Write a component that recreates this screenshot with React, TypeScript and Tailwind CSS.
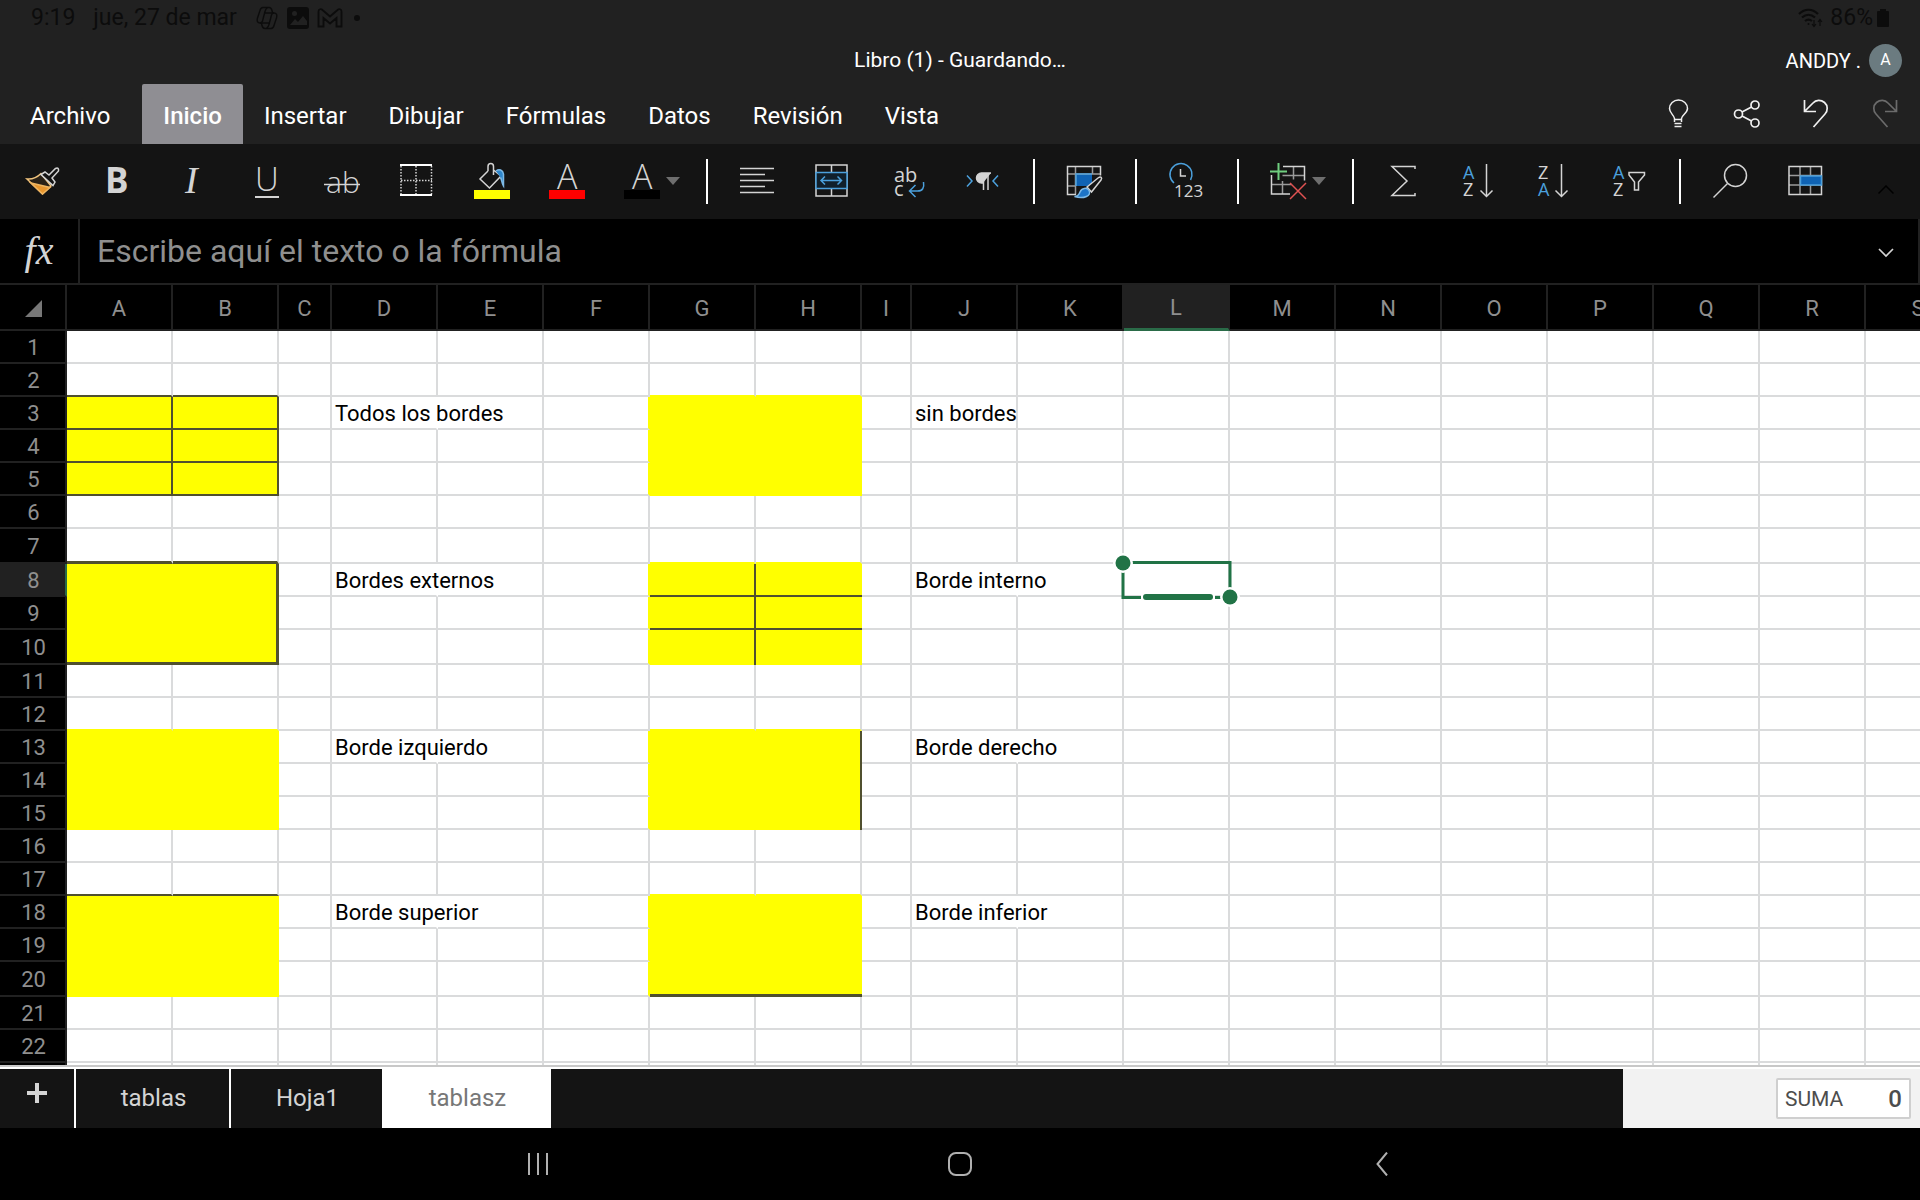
import type { ReactNode } from "react";

const columns = [
  { name: "A", width: "w-[106px]" },
  { name: "B", width: "w-[106px]" },
  { name: "C", width: "w-[53px]" },
  { name: "D", width: "w-[106px]" },
  { name: "E", width: "w-[106px]" },
  { name: "F", width: "w-[106px]" },
  { name: "G", width: "w-[106px]" },
  { name: "H", width: "w-[106px]" },
  { name: "I", width: "w-[50px]" },
  { name: "J", width: "w-[106px]" },
  { name: "K", width: "w-[106px]" },
  { name: "L", width: "w-[106px]" },
  { name: "M", width: "w-[106px]" },
  { name: "N", width: "w-[106px]" },
  { name: "O", width: "w-[106px]" },
  { name: "P", width: "w-[106px]" },
  { name: "Q", width: "w-[106px]" },
  { name: "R", width: "w-[106px]" },
  { name: "S", width: "w-[106px]" },
];

// the last row only peeks out above the sheet tabs, it gets no number
const lastRow = 23;
const rows = Array.from({ length: lastRow }, (_, i) => i + 1);
const tallRows = [7, 10, 20];

const texts: Record<string, string> = {
  D3: "Todos los bordes",
  J3: "sin bordes",
  D8: "Bordes externos",
  J8: "Borde interno",
  D13: "Borde izquierdo",
  J13: "Borde derecho",
  D18: "Borde superior",
  J18: "Borde inferior",
};

// text in these cells runs over into the next column
const overflowing = ["D3", "D8", "J8", "D13", "J13", "D18", "J18"];

type Edge = "thin" | "thick";
type Block = { row: number; col: number; top?: Edge; right?: Edge; bottom?: Edge; inner?: Edge };

// every block is 2 columns x 3 rows
const blocks: Block[] = [
  { row: 3, col: 0, top: "thin", right: "thin", bottom: "thin", inner: "thin" },
  { row: 3, col: 6 },
  { row: 8, col: 0, top: "thick", right: "thick", bottom: "thick" },
  { row: 8, col: 6, inner: "thin" },
  { row: 13, col: 0 },
  { row: 13, col: 6, right: "thin" },
  { row: 18, col: 0, top: "thin" },
  { row: 18, col: 6, bottom: "thick" },
];

const rightEdge = {
  grid: "border-r-2 border-r-[#dadbdc]",
  blank: "border-r-2 border-r-white",
  fill: "border-r-2 border-r-[#ffff00]",
  none: "",
  thin: "border-r-2 border-r-[#50502f]",
  thick: "border-r-3 border-r-[#50502f]",
};

const bottomEdge = {
  grid: "border-b-2 border-b-[#dadbdc]",
  fill: "border-b-2 border-b-[#ffff00]",
  none: "",
  thin: "border-b-2 border-b-[#50502f]",
  thick: "border-b-3 border-b-[#50502f]",
};

const cellStyle = (row: number, col: number) => {
  let right: keyof typeof rightEdge = "grid";
  let bottom: keyof typeof bottomEdge = "grid";
  let bg = "";

  if (overflowing.includes(columns[col].name + row)) right = "blank";

  for (const b of blocks) {
    const inCols = col === b.col || col === b.col + 1;
    const inRows = row >= b.row && row < b.row + 3;
    if (inCols && row === b.row - 1) bottom = b.top ?? "fill";
    if (inRows && col === b.col - 1) right = "fill";
    if (inCols && inRows) {
      bg = "bg-[#ffff00]";
      right = (col === b.col ? b.inner : b.right) ?? "none";
      bottom = (row === b.row + 2 ? b.bottom : b.inner) ?? "none";
    }
  }
  return `${rightEdge[right]} ${bottomEdge[bottom]} ${bg}`;
};

const menu = ["Archivo", "Inicio", "Insertar", "Dibujar", "Fórmulas", "Datos", "Revisión", "Vista"];

const Tool = ({ label, wide, children }: { label: string; wide?: boolean; children: ReactNode }) => (
  <button aria-label={label} className={`shrink-0 h-[75px] ${wide ? "w-[88px]" : "w-[75px]"}`}>
    <svg
      viewBox={wide ? "0 0 88 75" : "0 0 75 75"}
      className="block h-full w-full"
      fill="none"
      stroke="#d4d4d4"
      strokeWidth="1.5"
    >
      {children}
    </svg>
  </button>
);

const Divider = () => <div className="ml-[13px] mr-3 h-[45px] w-0.5 shrink-0 bg-white" />;

const Caret = () => <path d="M61 33h14l-7 8z" fill="#6e6e6e" stroke="none" />;

const Letter = ({ x, y, size, color = "#d4d4d4", children }: { x: number; y: number; size: number; color?: string; children: string }) => (
  <text x={x} y={y} fontSize={size} fill={color} stroke="none" fontWeight={size < 25 ? 400 : 300} fontFamily="'Open Sans', sans-serif">
    {children}
  </text>
);

const StatusBar = () => (
  <div className="flex h-9 items-center justify-between pl-[31px] pr-[31px] text-[23px] text-[#0c0c0c]">
    <div className="flex items-center">
      <span>9:19</span>
      <span className="ml-[18px]">jue, 27 de mar</span>
      <svg viewBox="0 0 24 24" className="ml-[18px] h-6 w-6" fill="none" stroke="currentColor" strokeWidth="1.4">
        <path d="M8 1.500h6c2 0 2.500 1 3 3l.5 2M8 1.500C6 1.500 5.300 3 4.800 5L2.500 12c-1 3 0 5 2.500 5h3M16 22.500h-6c-2 0-2.500-1-3-3l-.5-2M16 22.500c2 0 2.700-1.500 3.200-3.500l2.300-7c1-3 0-5-2.500-5h-3" />
        <path d="M12.500 1.500c-1.500 1-2 2-2.500 4L7.500 15c-.4 1.600-1 2-2.500 2M11.500 22.500c1.500-1 2-2 2.500-4L16.500 9c.4-1.600 1-2 2.500-2M9.500 7H16M8 17h6.500" />
      </svg>
      <svg viewBox="0 0 22 22" className="ml-2 h-[22px] w-[22px]">
        <rect width="22" height="22" rx="3" fill="currentColor" />
        <circle cx="7.500" cy="6.500" r="2.500" fill="#212121" />
        <path d="M3 18l5-6 3 3 5-6 4 5v4z" fill="#212121" />
      </svg>
      <svg viewBox="0 0 26 20" className="ml-2 h-5 w-[26px]" fill="none" stroke="currentColor" strokeWidth="1.8">
        <path d="M1.500 3.500C1.500 1 4 .5 5.500 2L13 8.500 20.500 2c1.500-1.500 4-1 4 1.500V18.500h-5V10L13 15.500 6.500 10v8.500h-5z" />
      </svg>
      <span className="ml-[11px] h-1.5 w-1.5 rounded-full bg-current" />
    </div>
    <div className="flex items-center">
      <svg viewBox="0 0 26 22" className="h-[22px] w-[26px]" fill="none" stroke="currentColor" strokeWidth="2.200">
        <path d="M1 7c6-5.500 13-5.500 19 0M4 10.500c4-3.500 9-3.500 13 0M7 14c2.500-2 4.500-2 7 0" />
        <circle cx="10.500" cy="17" r="1" fill="currentColor" stroke="none" />
        <path d="M16 13v6M14 17l2 2.500 2-2.500M22 19v-6M20 15l2-2.500 2 2.500" strokeWidth="1.200" />
      </svg>
      <span className="ml-1.5">86%</span>
      <svg viewBox="0 0 12 18" className="ml-1 h-[18px] w-3">
        <path d="M3 0h6v2h2q1 0 1 1v14q0 1-1 1H1q-1 0-1-1V3q0-1 1-1h2z" fill="currentColor" />
      </svg>
    </div>
  </div>
);

const Header = () => (
  <header className="bg-[#212121] text-white">
    <StatusBar />

    {/* title and account */}
    <div className="grid h-12 grid-cols-3 items-center pr-[18px]">
      <h1 className="col-start-2 pl-[18px] pt-0.5 text-center text-[21px]">Libro (1) - Guardando…</h1>
      <div className="flex items-center justify-end gap-2">
        <span className="pt-0.5 text-xl">ANDDY .</span>
        <span className="flex h-[33px] w-[33px] items-center justify-center rounded-full bg-[#6b7b80] text-base">A</span>
      </div>
    </div>

    {/* menu */}
    <div className="flex h-[60px] justify-between">
      <nav className="flex pl-[9px]">
        {menu.map((item) => (
          <button
            key={item}
            className={`px-[21px] pt-[3px] text-2xl first:mr-[11px] ${item === "Inicio" ? "rounded-t-xs bg-[#8f8e93] font-medium" : ""}`}
          >
            {item}
          </button>
        ))}
      </nav>
      <div className="flex items-center gap-[37px] pr-[19px]">
        <button aria-label="Ayuda">
          <svg viewBox="0 0 32 32" className="h-8 w-8" fill="none" stroke="#f0f0f0" strokeWidth="1.500">
            <path d="M12.500 24v-3.500C12 17 7.500 15 7.500 10.500a9 8.500 0 0 1 18 0C25.500 15 20 17 19.500 20.500V24M12.500 21.500h7M12.500 25.500h7M12.500 28.500h7" />
          </svg>
        </button>
        <button aria-label="Compartir">
          <svg viewBox="0 0 32 32" className="h-8 w-8" fill="none" stroke="#f0f0f0" strokeWidth="1.700">
            <circle cx="7.500" cy="16" r="4" />
            <circle cx="24" cy="7" r="4" />
            <circle cx="24" cy="25" r="4" />
            <path d="M11 14l9.500-5M11 18l9.500 5" />
          </svg>
        </button>
        <button aria-label="Deshacer">
          <svg viewBox="0 0 32 32" className="h-8 w-8" fill="none" stroke="#f0f0f0" strokeWidth="1.700">
            <path d="M4.500 2v11.500H16M4.500 13.500L13 5C16 1.500 21 1.500 24.500 4.500S28 13 25 16L13.500 29" />
          </svg>
        </button>
        <button aria-label="Rehacer">
          <svg viewBox="0 0 32 32" className="h-8 w-8" fill="none" stroke="#6b6b6b" strokeWidth="1.700">
            <path d="M27.500 2v11.500H16M27.500 13.500L19 5C16 1.500 11 1.500 7.500 4.500S4 13 7 16L18.500 29" />
          </svg>
        </button>
      </div>
    </div>
  </header>
);

const Toolbar = () => (
  <div className="flex h-[75px] items-center overflow-hidden bg-[#141414] pl-[5px]">
    <Tool label="Copiar formato">
      <path d="M22 35c5 .5 10-1.500 14-5.500l10 12.500-8.500 8z" fill="#2a2116" stroke="#efc27c" />
      <path d="M26 39l19 4.500-7.500 6.500z" fill="#e8962e" stroke="#efb45f" />
      <path d="M36 30.500l4-2.500 4 3 6.500-6.500q3.500-1.500 3 2.500L47 34l3 4-2 3.500z" fill="#141414" />
    </Tool>
    <Tool label="Negrita">
      <text x="25" y="49" fontSize="35" fontWeight="700" fill="#d4d4d4" stroke="none" fontFamily="'Open Sans', sans-serif">B</text>
    </Tool>
    <Tool label="Cursiva">
      <text x="30" y="49" fontSize="38" fontStyle="italic" fill="#d4d4d4" stroke="none" fontFamily="'Liberation Serif', serif">I</text>
    </Tool>
    <Tool label="Subrayado">
      <Letter x={25} y={47} size={33}>U</Letter>
      <path d="M25 53h24" strokeWidth="2" />
    </Tool>
    <Tool label="Tachado">
      <Letter x={21} y={49} size={30}>ab</Letter>
      <path d="M19 40.500h36" />
    </Tool>
    <Tool label="Bordes">
      <path d="M21 22v29M36 22v29M51.500 22v29M21 36.500h31" strokeDasharray="1.500 1.500" />
      <path d="M20 21h32M20 51h32" stroke="#fff" strokeWidth="2" />
    </Tool>
    <Tool label="Color de relleno">
      <path d="M33 27l-8 8 9.500 9L46 32l-7.500-6M33 27v-4.500c0-4 5.500-4 5.500 0V31" />
      <path d="M41 27c3-2.500 7-1 7.500 3v12c-2-3-1.500-6-3-8.500" fill="#2f87cc" stroke="#7db9e6" />
      <path d="M19 46h36v9H19z" fill="#ffff00" stroke="none" />
    </Tool>
    <Tool label="Color de fuente rojo">
      <Letter x={27} y={45} size={34}>A</Letter>
      <path d="M19 46h36v9H19z" fill="#ff0000" stroke="none" />
    </Tool>
    <Tool label="Color de fuente" wide>
      <Letter x={27} y={45} size={34}>A</Letter>
      <path d="M19 46h36v9H19z" fill="#000" stroke="none" />
      <Caret />
    </Tool>
    <Divider />
    <Tool label="Alinear">
      <path d="M20 24.500h34M20 30.500h25M20 36.500h34M20 42.500h25M20 48.500h34" />
    </Tool>
    <Tool label="Combinar y centrar">
      <path d="M21 21h31v31H21zM36.500 21v7M36.500 45v7" />
      <path d="M21 28.500h31v16H21z" fill="#10202c" stroke="#4ba0dc" />
      <path d="M26 36.500h20.500M30 32.500l-4 4 4 4M42.500 32.500l4 4-4 4" stroke="#4ba0dc" />
    </Tool>
    <Tool label="Ajustar texto">
      <Letter x={24} y={38} size={20}>ab</Letter>
      <Letter x={24} y={52} size={20}>c</Letter>
      <path d="M53.500 38c1 6-1 9-6 9H39.500M45.500 41l-6 6 6 6" stroke="#4ba0dc" />
    </Tool>
    <Tool label="Dirección del texto">
      <path d="M22 31.500l5 5.500-5 5.500M53 31.500L48 37l5 5.500" stroke="#4ba0dc" />
      <path d="M46 29H36.500a5 5 0 0 0 0 10H38" fill="#d4d4d4" />
      <path d="M38.500 29v17M43 29v17" />
    </Tool>
    <Divider />
    <Tool label="Formato de tabla">
      <path d="M29 30h16v12H29z" fill="#0f63b4" stroke="none" />
      <path d="M28.500 22.500v28M45.500 22.500v8M20.500 30h33M20.500 42h8" stroke="#9a9a9a" />
      <path d="M29 50.500h-8.500v-28h33v9" />
      <path d="M29 42V30h16" stroke="#4ba0dc" />
      <path d="M40 43l11-9c3-2 4.500-.5 3 2L44.500 48z" fill="#141414" />
      <path d="M27.500 52.500c3 0 4.500-1.500 5.500-4.500 1.500-4 7-5 9-1.500 3 5-5 9-14.500 6z" fill="#1d74c7" stroke="#7db9e6" />
    </Tool>
    <Divider />
    <Tool label="Formato de número">
      <path d="M25 39a11 11 0 1 1 16.500-3" stroke="#4ba0dc" />
      <path d="M31.500 25v7H37" />
      <Letter x={25} y={53} size={17}>123</Letter>
    </Tool>
    <Divider />
    <Tool label="Insertar y eliminar celdas" wide>
      <path d="M31.500 37v13M42.500 22.500v13M31.500 31.500h22M20.500 40.500h20" stroke="#9a9a9a" />
      <path d="M32 22.500h21.500v14M20.500 31v19H39" />
      <path d="M27.500 19v17M19 27.500h17" stroke="#6fcf7f" strokeWidth="2" />
      <path d="M39 39l16 16M55 39L39 55" stroke="#e05252" />
      <Caret />
    </Tool>
    <Divider />
    <Tool label="Autosuma">
      <path d="M49 25v-2.500H26L41 37 26 51.500h23V49" />
    </Tool>
    <Tool label="Ordenar de A a Z">
      <Letter x={22} y={35} size={18} color="#4ba0dc">A</Letter>
      <Letter x={22} y={52} size={18}>Z</Letter>
      <path d="M45.500 20v32.500M39.500 46.500l6 6 6-6" />
    </Tool>
    <Tool label="Ordenar de Z a A">
      <Letter x={22} y={35} size={18}>Z</Letter>
      <Letter x={22} y={52} size={18} color="#4ba0dc">A</Letter>
      <path d="M45.500 20v32.500M39.500 46.500l6 6 6-6" />
    </Tool>
    <Tool label="Ordenar y filtrar">
      <Letter x={22} y={35} size={18} color="#4ba0dc">A</Letter>
      <Letter x={22} y={52} size={18}>Z</Letter>
      <path d="M38 28.500h15.500V31l-6 7v8h-4v-8L38 31z" />
    </Tool>
    <Divider />
    <Tool label="Buscar">
      <circle cx="42.500" cy="31.500" r="11" />
      <path d="M34.500 39.500L20.500 53.500" />
    </Tool>
    <Tool label="Tabla">
      <path d="M32 22.500v28M42.500 22.500v28M21 31.500h32.500M21 41h32.500" stroke="#9a9a9a" />
      <path d="M21 22.500h32.500v28H21z" />
      <path d="M32.500 32h21v9h-21z" fill="#0f63b4" stroke="#4ba0dc" />
    </Tool>
    <button aria-label="Contraer" className="ml-auto flex items-center self-stretch pr-[26px] pt-4">
      <svg viewBox="0 0 16 10" className="h-2.5 w-4" fill="none" stroke="#000" strokeWidth="1.500">
        <path d="M.5 8.500L8 1l7.500 7.500" />
      </svg>
    </button>
  </div>
);

const FormulaBar = () => (
  <div className="flex h-16 border-r-2 border-[#212121] bg-black">
    <label
      htmlFor="formula"
      className="flex w-20 items-center justify-center border-r-2 border-[#212121] font-['Liberation_Serif',serif] text-[40px] italic leading-10 text-[#d4d4d4]"
    >
      fx
    </label>
    <input
      id="formula"
      placeholder="Escribe aquí el texto o la fórmula"
      className="min-w-0 flex-1 px-[17px] text-[32px] text-white outline-none placeholder:text-[#8f8f8f]"
    />
    <button aria-label="Expandir" className="pr-6 pt-1">
      <svg viewBox="0 0 16 10" className="h-2.5 w-4" fill="none" stroke="#d4d4d4" strokeWidth="1.700">
        <path d="M1 1l7 7 7-7" />
      </svg>
    </button>
  </div>
);

// selected cell outline with its two drag handles
const Selection = () => (
  <svg viewBox="0 0 130 60" className="absolute -left-3 -top-3 h-[60px] w-[130px]">
    <path d="M11 10.500h107v35H11z" fill="none" stroke="#217346" strokeWidth="3" />
    <rect x="29" y="40" width="74" height="11" fill="#fff" />
    <rect x="31" y="42" width="70" height="6" rx="3" fill="#217346" />
    <circle cx="11" cy="11" r="10" fill="#fff" />
    <circle cx="11" cy="11" r="7.500" fill="#217346" />
    <circle cx="118" cy="45" r="10" fill="#fff" />
    <circle cx="118" cy="45" r="7.500" fill="#217346" />
  </svg>
);

const Sheet = () => (
  <main className="min-h-0 flex-1 overflow-hidden bg-white">
    <table className="w-px table-fixed border-separate border-spacing-0 text-[22px] leading-7">
      <colgroup>
        <col className="w-[67px]" />
        {columns.map((c) => (
          <col key={c.name} className={c.width} />
        ))}
      </colgroup>
      <thead>
        <tr className="h-12 bg-black text-[#8f8f8f]">
          <td className="border-y-2 border-r-2 border-[#212121] p-0">
            <svg viewBox="0 0 17 17" className="ml-[25px] mt-0.5 h-[17px] w-[17px]">
              <path d="M17 0v17H0z" fill="#777" />
            </svg>
          </td>
          {columns.map((c) => (
            <th
              key={c.name}
              scope="col"
              className={`border-y-2 border-r-2 border-[#212121] p-0 pt-[3px] font-normal ${
                c.name === "L" ? "border-b-3 border-b-[#2a6b48] bg-[#212121]" : ""
              }`}
            >
              {c.name}
            </th>
          ))}
        </tr>
      </thead>
      <tbody>
        {rows.map((row) => (
          <tr key={row} className={tallRows.includes(row) ? "h-[35px]" : "h-[33px]"}>
            <th
              scope="row"
              className={`border-b-2 border-r-2 border-[#212121] p-0 pl-0.5 pt-[3px] font-normal text-[#8f8f8f] ${
                row === 8 ? "border-r-[#2a6b48] bg-[#212121]" : "bg-black"
              }`}
            >
              {row < lastRow && row}
            </th>
            {columns.map((c, col) => {
              const id = c.name + row;
              return (
                <td
                  key={id}
                  className={`whitespace-nowrap p-0 pl-[3px] pt-[3px] text-black ${id === "L8" ? "relative" : ""} ${cellStyle(row, col)}`}
                >
                  {texts[id]}
                  {id === "L8" && <Selection />}
                </td>
              );
            })}
          </tr>
        ))}
      </tbody>
    </table>
  </main>
);

const SheetTabs = () => (
  <footer className="border-t-2 border-[#c8c8c8] bg-white pt-0.5">
    <div className="flex h-[59px] bg-[#141414] text-2xl text-[#d4d4d4]">
      <button aria-label="Nueva hoja" className="flex w-[76px] justify-center border-r-2 border-white pt-3.5">
        <svg viewBox="0 0 20 20" className="h-5 w-5">
          <path d="M8 0h4v8h8v4h-8v8H8v-8H0V8h8z" fill="#d4d4d4" />
        </svg>
      </button>
      <button className="w-[155px] border-r-2 border-white pb-0.5 pl-0.5">tablas</button>
      <button className="w-[151px] pb-0.5 pl-0.5">Hoja1</button>
      <button className="w-[169px] bg-white pb-0.5 pl-0.5 text-[#777]">tablasz</button>
      <div className="ml-auto flex w-[297px] items-center justify-end bg-[#f2f2f2] pr-[9px]">
        <div className="flex h-[41px] w-[135px] items-center justify-between rounded-xs border-2 border-[#cfcfcf] bg-white px-[7px] text-[#4d4d4d]">
          <span className="text-[21px]">SUMA</span>
          <span className="text-2xl font-medium">0</span>
        </div>
      </div>
    </div>
  </footer>
);

const NavBar = () => (
  <div className="flex h-[72px] items-center justify-center bg-black">
    <button aria-label="Recientes" className="flex w-[22%] justify-center">
      <svg viewBox="0 0 24 24" className="h-6 w-6" fill="none" stroke="#b0b0b0" strokeWidth="2">
        <path d="M3 1v22M12 1v22M21 1v22" />
      </svg>
    </button>
    <button aria-label="Inicio" className="flex w-[22%] justify-center">
      <svg viewBox="0 0 24 24" className="h-6 w-6" fill="none" stroke="#b0b0b0" strokeWidth="2">
        <rect x="1" y="1" width="22" height="22" rx="7" />
      </svg>
    </button>
    <button aria-label="Atrás" className="flex w-[22%] justify-center">
      <svg viewBox="0 0 24 24" className="h-6 w-6" fill="none" stroke="#b0b0b0" strokeWidth="2">
        <path d="M17 .5L7.500 12 17 23.500" />
      </svg>
    </button>
  </div>
);

const App = () => {
  return (
    <div className="flex h-screen flex-col overflow-hidden bg-black font-['Roboto',sans-serif]">
      <Header />
      <Toolbar />
      <FormulaBar />
      <Sheet />
      <SheetTabs />
      <NavBar />
    </div>
  );
};

export default App;
